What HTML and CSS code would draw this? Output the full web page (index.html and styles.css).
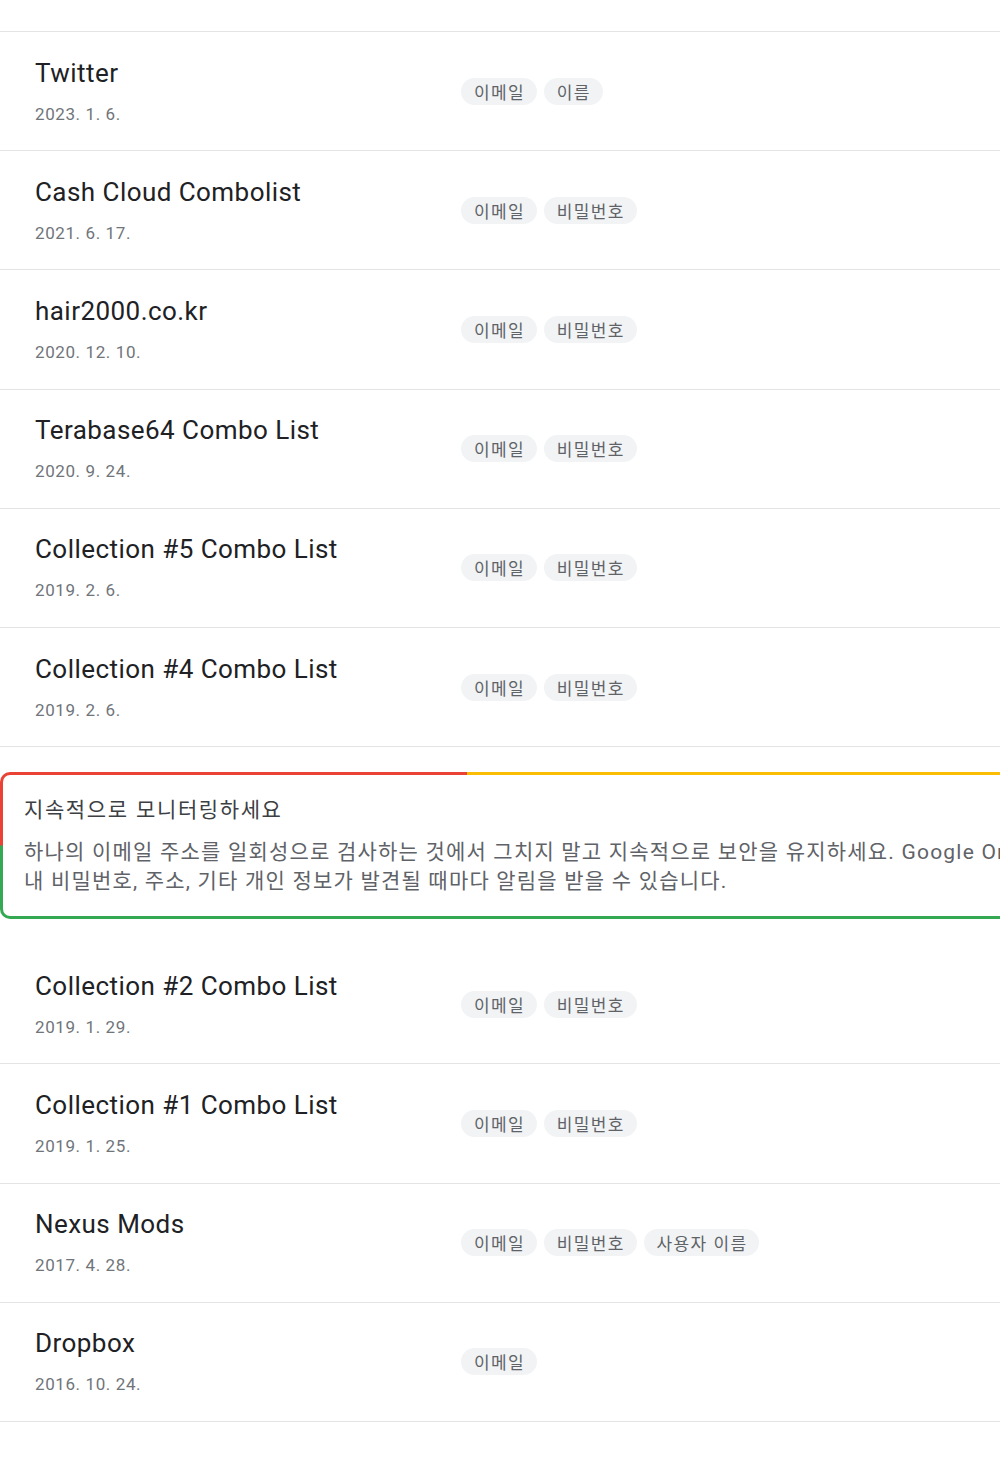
FILE: index.html
```html
<!DOCTYPE html>
<html lang="ko">
<head>
<meta charset="utf-8">
<title>Breaches</title>
<link rel="stylesheet" href="styles.css">
</head>
<body>
<div class="page">
  <div class="top-spacer"></div>
  <ul class="list">
    <li class="row"><div class="info"><div class="name">Twitter</div><div class="date">2023. 1. 6.</div></div><div class="chips"><span class="chip">이메일</span><span class="chip">이름</span></div></li>
    <li class="row"><div class="info"><div class="name">Cash Cloud Combolist</div><div class="date">2021. 6. 17.</div></div><div class="chips"><span class="chip">이메일</span><span class="chip">비밀번호</span></div></li>
    <li class="row"><div class="info"><div class="name">hair2000.co.kr</div><div class="date">2020. 12. 10.</div></div><div class="chips"><span class="chip">이메일</span><span class="chip">비밀번호</span></div></li>
    <li class="row"><div class="info"><div class="name">Terabase64 Combo List</div><div class="date">2020. 9. 24.</div></div><div class="chips"><span class="chip">이메일</span><span class="chip">비밀번호</span></div></li>
    <li class="row"><div class="info"><div class="name">Collection #5 Combo List</div><div class="date">2019. 2. 6.</div></div><div class="chips"><span class="chip">이메일</span><span class="chip">비밀번호</span></div></li>
    <li class="row"><div class="info"><div class="name">Collection #4 Combo List</div><div class="date">2019. 2. 6.</div></div><div class="chips"><span class="chip">이메일</span><span class="chip">비밀번호</span></div></li>
  </ul>

  <div class="promo">
    <div class="promo-inner">
      <div class="promo-title">지속적으로 모니터링하세요</div>
      <p class="promo-text">하나의 이메일 주소를 일회성으로 검사하는 것에서 그치지 말고 지속적으로 보안을 유지하세요. Google One<br>내 비밀번호, 주소, 기타 개인 정보가 발견될 때마다 알림을 받을 수 있습니다.</p>
    </div>
  </div>

  <ul class="list">
    <li class="row"><div class="info"><div class="name">Collection #2 Combo List</div><div class="date">2019. 1. 29.</div></div><div class="chips"><span class="chip">이메일</span><span class="chip">비밀번호</span></div></li>
    <li class="row"><div class="info"><div class="name">Collection #1 Combo List</div><div class="date">2019. 1. 25.</div></div><div class="chips"><span class="chip">이메일</span><span class="chip">비밀번호</span></div></li>
    <li class="row"><div class="info"><div class="name">Nexus Mods</div><div class="date">2017. 4. 28.</div></div><div class="chips"><span class="chip">이메일</span><span class="chip">비밀번호</span><span class="chip">사용자 이름</span></div></li>
    <li class="row"><div class="info"><div class="name">Dropbox</div><div class="date">2016. 10. 24.</div></div><div class="chips"><span class="chip">이메일</span></div></li>
  </ul>
</div>
</body>
</html>
```

FILE: styles.css
```css
html, body {
  margin: 0;
  padding: 0;
  background: #ffffff;
  overflow: hidden;
}

.page {
  width: 1000px;
  overflow: hidden;
  font-family: Roboto, "Noto Sans CJK KR", sans-serif;
}

.top-spacer {
  height: 31px;
  border-bottom: 1px solid #e3e3e3;
}

.list {
  list-style: none;
  margin: 0;
  padding: 0;
}

.row {
  display: grid;
  grid-template-columns: 426px 1fr;
  align-items: center;
  height: 118.2px;
  padding-left: 35px;
  border-bottom: 1px solid #e3e3e3;
}

.info {
  display: flex;
  flex-direction: column;
}

.name {
  font-family: Roboto, sans-serif;
  font-size: 26px;
  line-height: 32px;
  letter-spacing: 0.45px;
  color: #202124;
  white-space: nowrap;
}

.date {
  margin-top: 13px;
  font-family: Roboto, sans-serif;
  font-size: 17px;
  line-height: 24px;
  letter-spacing: 0.6px;
  color: #70757a;
}

.chips {
  display: flex;
  gap: 7px;
}

.chip {
  display: inline-block;
  height: 27px;
  line-height: 27px;
  padding: 0 12px 0 13px;
  border-radius: 14px;
  background: #f1f3f4;
  color: #5f6368;
  font-family: "Noto Sans CJK KR", sans-serif;
  font-size: 17px;
  letter-spacing: 1.3px;
}

.promo {
  width: 1300px;
  margin: 25px 0 26px 0;
  padding: 3px;
  border-radius: 10px;
  background:
    linear-gradient(to right, #ea4335 467px, #fbbc04 467px) top left / 100% 50% no-repeat,
    #34a853;
}

.promo-inner {
  background: #ffffff;
  border-radius: 7px;
  padding: 19px 21px 20px 21px;
}

.promo-title {
  font-family: "Noto Sans CJK KR", sans-serif;
  font-size: 21px;
  line-height: 28px;
  letter-spacing: 1.6px;
  color: #3c4043;
}

.promo-text {
  margin: 16px 0 0 0;
  font-family: Roboto, "Noto Sans CJK KR", sans-serif;
  font-size: 21px;
  line-height: 29px;
  letter-spacing: 1.2px;
  color: #5f6368;
  white-space: nowrap;
}
```
